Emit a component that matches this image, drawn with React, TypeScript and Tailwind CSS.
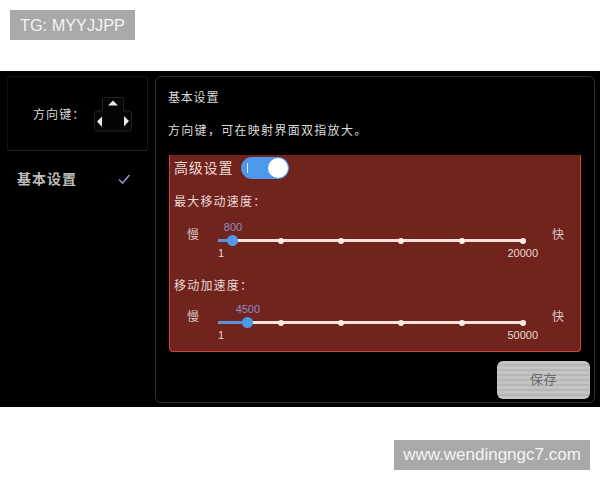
const font = "font-['Liberation_Sans','Noto_Sans_CJK_SC',sans-serif]";

function DPad() {
  return (
    <svg width="38" height="35" viewBox="0 0 38 35" className="block">
      <path d="M8.500 14V2q0-1.500 1.500-1.500h18q1.500 0 1.500 1.500v12h5.500q2.500 0 2.500 2.500v15q0 2.500-2.500 2.500H3q-2.500 0-2.500-2.500v-15Q.5 14 3 14z" fill="#050505" stroke="#222222" strokeWidth="1" />
      <path d="M19 3.500l5 5h-10zM3 24.500l5-5v10.500zM35 24l-5-5v10.500z" fill="#e8e8e8" />
    </svg>
  );
}

function Slider({ value, pct, max, title, mb, gap }: { value: string; pct: number; max: string; title: string; mb: string; gap: string }) {
  const dots = [20.7, 40.3, 60, 80, 100];
  return (
    <div className={mb}>
      <div className="text-[12px] leading-[16px] ml-[4px] tracking-[1.2px] text-[#e9dcd5]">{title}</div>
      <div className={`flex items-start ${gap}`}>
        <div className="w-[48px] pl-[17px] pt-[7px] text-[12px] leading-[14px] text-[#d9cbc4]">慢</div>
        <div className="w-[305px] shrink-0">
          <div className="h-[13px] relative">
            <span className="absolute -translate-x-1/2 top-0 text-[11px] leading-[13px] text-[#8f8fc0]" style={{ left: `${pct}%` }}>{value}</span>
          </div>
          <div className="relative h-[3px] mt-[5px] bg-[#f7e3da] rounded-full">
            <div className="absolute left-0 top-0 h-[3px] bg-[#5d8fd8] rounded-full" style={{ width: `${pct}%` }} />
            <div className="absolute top-[-4px] w-[11px] h-[11px] -ml-[5.500px] rounded-full bg-[#4f9ae8]" style={{ left: `${pct}%` }} />
            {dots.map((d) => (
              <div key={d} className="absolute top-[-1.500px] w-[6px] h-[6px] -ml-[3px] rounded-full bg-[#fdeee6]" style={{ left: `${d}%` }} />
            ))}
          </div>
          <div className="flex justify-between mt-[5px] text-[11px] leading-[13px] text-[#e6d8d0]">
            <span className="ml-[0px]">1</span>
            <span className="-mr-[15px]">{max}</span>
          </div>
        </div>
        <div className="pl-[29px] pt-[7px] text-[12px] leading-[14px] text-[#d9cbc4]">快</div>
      </div>
    </div>
  );
}

export default function App() {
  return (
    <div className={`w-[600px] h-[480px] bg-white overflow-hidden ${font}`}>
      <div className="h-[71px] pt-[10px] pl-[10px]">
        <div className="w-[125px] h-[30px] bg-[#a9a9a9] text-[#f4f4f4] text-[16.300px] leading-[30px] pl-[10px]">TG: MYYJJPP</div>
      </div>
      <div className="h-[336px] bg-black flex pt-[5px] pl-[7px] pr-[5px] pb-[4px]">
        <div className="w-[148px] shrink-0">
          <div className="w-[141px] h-[75px] rounded-[3px] border border-t-[#141414] border-l-[#121212] border-r-[#181818] border-b-[#262626] flex items-center pl-[25px]">
            <span className="text-[12px] tracking-[1.100px] text-[#d8d8d8] w-[61px] mt-[3px]">方向键：</span>
            <div className="mt-[1px]">
              <DPad />
            </div>
          </div>
          <div className="flex items-center justify-between mt-[20px] pl-[10px] pr-[24px]">
            <span className="text-[14px] leading-[16px] font-bold tracking-[1px] text-[#bdbdbd]">基本设置</span>
            <svg width="14" height="12" viewBox="0 0 14 12"><path d="M2 6.500l3.500 3.500L12.500 2" fill="none" stroke="#8d8dc6" strokeWidth="1.600" /></svg>
          </div>
        </div>
        <div className="flex-1 rounded-[6px] border border-[#303030] pl-[13px] pr-[13px] pt-[13px]">
          <div className="text-[12px] leading-[16px] tracking-[0.8px] text-[#d8d8d8] -ml-[1px]">基本设置</div>
          <div className="text-[12px] leading-[16px] tracking-[1.300px] text-[#dcdcdc] -ml-[1px] mt-[17px]">方向键，可在映射界面双指放大。</div>
          <div className="w-[412px] h-[197px] mt-[16px] bg-[#71231e] border border-[#c9463f] border-t-0 rounded-b-[4px] pt-[2px]">
            <div className="flex items-center ml-[4px]">
              <span className="text-[14px] leading-[20px] tracking-[0.8px] text-[#eddcd6]">高级设置</span>
              <div className="ml-[8px] w-[48px] h-[22px] rounded-full bg-[#4c99ea] relative">
                <div className="absolute left-[6px] top-[6px] w-[1px] h-[10px] bg-[#dbe9f8]" />
                <div className="absolute right-[1px] top-[1px] w-[20px] h-[20px] rounded-full bg-white" />
              </div>
            </div>
            <div className="mt-[15px]">
              <Slider title="最大移动速度：" value="800" pct={4.9} max="20000" mb="mb-[18px]" gap="mt-[11px]" />
              <Slider title="移动加速度：" value="4500" pct={9.8} max="50000" mb="" gap="mt-[9px]" />
            </div>
          </div>
          <div className="flex justify-end mt-[9px] -mr-[9px]">
            <div className="w-[93px] h-[38px] rounded-[6px] bg-[repeating-linear-gradient(180deg,#c4c4c4_0px,#c4c4c4_3px,#b6b6b6_3px,#b6b6b6_5px)] flex items-center justify-center text-[13px] tracking-[0.5px] text-[#6a6a6a]">保存</div>
          </div>
        </div>
      </div>
      <div className="flex justify-end pr-[10px] pt-[33px]">
        <div className="w-[196px] h-[30px] bg-[#a9a9a9] text-[#f4f4f4] text-[17px] leading-[30px] text-center">www.wendingngc7.com</div>
      </div>
    </div>
  );
}
